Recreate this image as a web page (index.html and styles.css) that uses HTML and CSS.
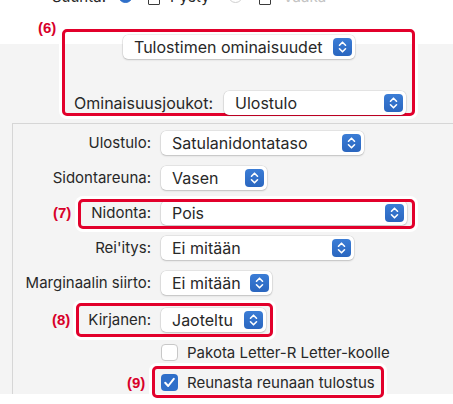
FILE: index.html
```html
<!DOCTYPE html>
<html lang="fi">
<head>
<meta charset="utf-8">
<link rel="stylesheet" href="styles.css">
</head>
<body>
<div class="page">
  <div class="suunta">
    <span class="s-label">Suunta:</span>
    <span class="radio on"></span>
    <span class="pg"></span>
    <span class="s-text">Pysty</span>
    <span class="radio"></span>
    <span class="pg wide"></span>
    <span class="s-text dim">Vaaka</span>
  </div>

  <div class="box6">
    <span class="num n6">(6)</span>
    <div class="popup header"><span class="ptext">Tulostimen ominaisuudet</span><span class="stepper"><svg viewBox="0 0 19 18" width="19" height="18"><path d="M6.5 7.2 9.5 4.2 12.5 7.2M6.5 10.8 9.5 13.8 12.5 10.8" fill="none" stroke="#fff" stroke-width="1.6" stroke-linecap="round" stroke-linejoin="round"/></svg></span></div>
    <div class="setrow">
      <span class="setlabel">Ominaisuusjoukot:</span>
      <div class="popup w-set"><span class="ptext">Ulostulo</span><span class="stepper"><svg viewBox="0 0 19 18" width="19" height="18"><path d="M6.5 7.2 9.5 4.2 12.5 7.2M6.5 10.8 9.5 13.8 12.5 10.8" fill="none" stroke="#fff" stroke-width="1.6" stroke-linecap="round" stroke-linejoin="round"/></svg></span></div>
    </div>
  </div>

  <div class="panel">
    <div class="row">
      <span class="lab">Ulostulo:</span>
      <div class="popup w-ulos"><span class="ptext">Satulanidontataso</span><span class="stepper"><svg viewBox="0 0 19 18" width="19" height="18"><path d="M6.5 7.2 9.5 4.2 12.5 7.2M6.5 10.8 9.5 13.8 12.5 10.8" fill="none" stroke="#fff" stroke-width="1.6" stroke-linecap="round" stroke-linejoin="round"/></svg></span></div>
    </div>
    <div class="row">
      <span class="lab">Sidontareuna:</span>
      <div class="popup w-sid"><span class="ptext">Vasen</span><span class="stepper"><svg viewBox="0 0 19 18" width="19" height="18"><path d="M6.5 7.2 9.5 4.2 12.5 7.2M6.5 10.8 9.5 13.8 12.5 10.8" fill="none" stroke="#fff" stroke-width="1.6" stroke-linecap="round" stroke-linejoin="round"/></svg></span></div>
    </div>
    <div class="row">
      <span class="lab">Nidonta:</span>
      <div class="popup w-nid"><span class="ptext">Pois</span><span class="stepper"><svg viewBox="0 0 19 18" width="19" height="18"><path d="M6.5 7.2 9.5 4.2 12.5 7.2M6.5 10.8 9.5 13.8 12.5 10.8" fill="none" stroke="#fff" stroke-width="1.6" stroke-linecap="round" stroke-linejoin="round"/></svg></span></div>
      <span class="num n7">(7)</span>
      <span class="mark m7"></span>
    </div>
    <div class="row">
      <span class="lab">Rei'itys:</span>
      <div class="popup w-rei"><span class="ptext">Ei mitään</span><span class="stepper"><svg viewBox="0 0 19 18" width="19" height="18"><path d="M6.5 7.2 9.5 4.2 12.5 7.2M6.5 10.8 9.5 13.8 12.5 10.8" fill="none" stroke="#fff" stroke-width="1.6" stroke-linecap="round" stroke-linejoin="round"/></svg></span></div>
    </div>
    <div class="row">
      <span class="lab">Marginaalin siirto:</span>
      <div class="popup w-mar"><span class="ptext">Ei mitään</span><span class="stepper"><svg viewBox="0 0 19 18" width="19" height="18"><path d="M6.5 7.2 9.5 4.2 12.5 7.2M6.5 10.8 9.5 13.8 12.5 10.8" fill="none" stroke="#fff" stroke-width="1.6" stroke-linecap="round" stroke-linejoin="round"/></svg></span></div>
    </div>
    <div class="row r-kirj">
      <span class="lab">Kirjanen:</span>
      <div class="popup w-kir"><span class="ptext">Jaoteltu</span><span class="stepper"><svg viewBox="0 0 19 18" width="19" height="18"><path d="M6.5 7.2 9.5 4.2 12.5 7.2M6.5 10.8 9.5 13.8 12.5 10.8" fill="none" stroke="#fff" stroke-width="1.6" stroke-linecap="round" stroke-linejoin="round"/></svg></span></div>
      <span class="num n8">(8)</span>
      <span class="mark m8"></span>
    </div>
    <div class="row r-pak">
      <span class="lab"></span>
      <span class="check"></span>
      <span class="ctext">Pakota Letter-R Letter-koolle</span>
    </div>
    <div class="row r-reun">
      <span class="lab"></span>
      <span class="check on"><svg viewBox="0 0 17 17" width="17" height="17"><path d="M4.2 8.8 7.2 12 12.8 4.8" fill="none" stroke="#fff" stroke-width="2" stroke-linecap="round" stroke-linejoin="round"/></svg></span>
      <span class="ctext">Reunasta reunaan tulostus</span>
      <span class="num n9">(9)</span>
      <span class="mark m9"></span>
    </div>
  </div>
</div>
</body>
</html>
```

FILE: styles.css
```css
* { box-sizing: border-box; margin: 0; padding: 0; }

body {
  margin: 0;
  font-family: "Inter", "Liberation Sans", sans-serif;
  font-size: 15px;
  color: #282828;
  background: #fff;
  overflow: hidden;
}

.page {
  height: 404px;
  overflow: hidden;
  background: linear-gradient(to bottom, #fff 0, #fff 44px, #f4f4f4 44px, #f4f4f4 394px, #fff 394px);
}

/* clipped orientation row at the top */
.suunta {
  display: flex;
  align-items: center;
  height: 24px;
  margin-top: -16px;
  padding-left: 52px;
}
.s-label { width: 66px; }
.radio {
  width: 15px;
  height: 15px;
  border-radius: 50%;
  border: 1px solid #cfcfcf;
  background: #fff;
  margin-bottom: 2px;
}
.radio.on { background: #2f6fc9; border-color: #2f6fc9; }
.pg {
  width: 12px;
  height: 14px;
  border: 1.5px solid #3a3a3a;
  border-radius: 1px;
  margin-left: 15px;
  margin-top: 4px;
}
.pg.wide { margin-left: 16px; }
.s-text { margin-left: 10px; width: 58px; }
.s-text.dim { margin-left: 12px; color: #c4c4c4; }

/* annotation box (6) */
.box6 {
  position: relative;
  margin: 21px 0 0 62px;
  width: 353px;
  height: 87px;
  border: 3px solid #e2002b;
  border-radius: 5px;
  box-shadow: 0 0 0 3px #fff;
  padding-top: 3px;
  font-size: 16px;
}
.header { margin-left: 58px; width: 232px; height: 22px; }
.setrow {
  display: flex;
  align-items: center;
  margin-top: 32px;
  padding-left: 9px;
  height: 23px;
}
.setlabel { width: 150px; }
.w-set { width: 182px; height: 23px; }

/* popups */
.popup {
  display: flex;
  align-items: center;
  height: 24px;
  padding-left: 11px;
  padding-right: 3px;
  background: #fff;
  border-radius: 5px;
  box-shadow: 0 0 0 0.5px rgba(0, 0, 0, 0.12), 0 1px 2px rgba(0, 0, 0, 0.16);
  font-size: 16px;
}
.ptext { flex: 1; white-space: nowrap; }
.stepper {
  display: flex;
  width: 19px;
  height: 18px;
  border-radius: 4px;
  background: linear-gradient(to bottom, #3b7dd6, #2a66bf);
}

/* panel */
.panel {
  margin: 7px 0 0 12px;
  height: 271px;
  border-top: 1px solid #d6d6d6;
  border-left: 1px solid #d6d6d6;
  padding-top: 1px;
}
.row {
  position: relative;
  display: flex;
  align-items: center;
  height: 35px;
}
.r-kirj { margin-top: 2px; }
.r-pak { margin-top: -2px; }
.r-reun { margin-top: -5px; }
.lab {
  width: 138px;
  margin-right: 10px;
  text-align: right;
  white-space: nowrap;
}
.w-ulos { width: 203px; }
.w-sid { width: 106px; }
.w-nid { width: 246px; }
.w-rei { width: 193px; }
.w-mar { width: 111px; }
.w-kir { width: 105px; }

.check {
  display: flex;
  width: 17px;
  height: 17px;
  border-radius: 4px;
  border: 1px solid #c8c8c8;
  background: #fff;
  margin-right: 9px;
}
.check.on { border: none; background: #2f6fc9; }
.ctext { white-space: nowrap; }

/* annotation numbers and frames */
.num {
  position: absolute;
  font-family: "Liberation Sans", Arial, sans-serif;
  font-weight: bold;
  font-size: 15px;
  line-height: 12px;
  color: #d8002a;
}
.row .num { top: 0; bottom: 0; display: flex; align-items: center; line-height: 1; }
.n6 { left: -27px; top: -10px; }
.n7 { left: 40px; }
.n8 { left: 39px; }
.n9 { left: 114px; }

.mark {
  position: absolute;
  border: 3px solid #e2002b;
  border-radius: 5px;
  box-shadow: 0 0 0 3px #fff;
}
.m7 { left: 65px; top: 4px; width: 337px; height: 30px; }
.m8 { left: 63px; top: 1px; width: 197px; height: 34px; }
.m9 { left: 139px; top: 1px; width: 232px; height: 32px; }
```
